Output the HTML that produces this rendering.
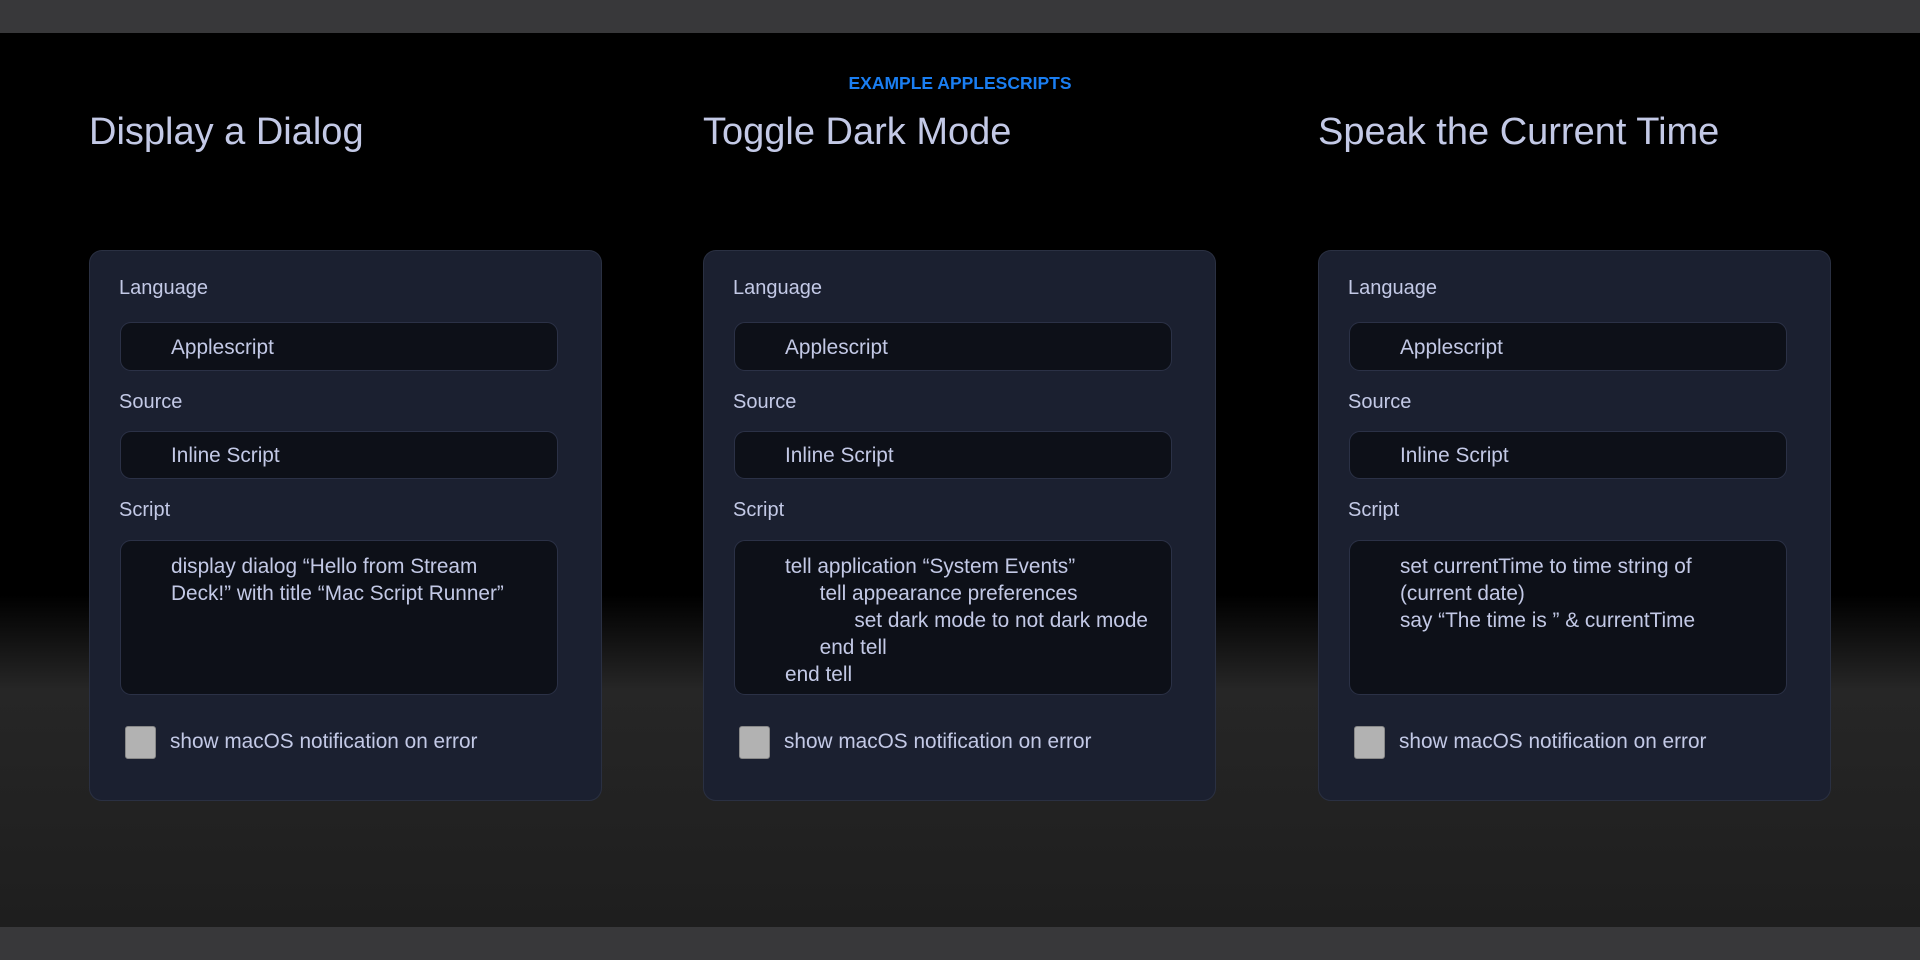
<!DOCTYPE html>
<html><head><meta charset="utf-8"><style>
*{box-sizing:border-box;margin:0;padding:0}
html,body{width:1920px;height:960px;overflow:hidden}
body{font-family:"Liberation Sans",sans-serif;background:linear-gradient(#000 0,#000 595px,#262626 690px,#1e1e1e 927px);position:relative}
.bar{position:absolute;left:0;width:1920px;height:33px;background:#38383a}
.h{position:absolute;top:73px;left:0;width:1920px;text-align:center;color:#1a7ef2;font-weight:bold;font-size:17.5px}
.col{position:absolute;top:0;width:513px}
.t{position:absolute;top:111px;left:0;white-space:nowrap;color:#c3c9e6;font-size:38px}
.card{position:absolute;top:250px;left:0;width:513px;height:551px;background:#1b2030;border:1px solid #2a3042;border-radius:13px}
.lb{position:absolute;left:29px;color:#c3c9e6;font-size:20px}
.in{position:absolute;left:30px;width:438px;background:#0d1018;border:1px solid #2b3146;border-radius:11px;color:#c3c9e6;font-size:20.8px;padding-left:50px}
.code{line-height:27px;padding-top:12px;white-space:pre}
.cb{position:absolute;left:35px;top:475px;width:31px;height:33px;background:#b2b2b2;border:1px solid #888;border-radius:3px}
.ct{position:absolute;left:80px;top:479px;color:#c3c9e6;font-size:20.8px}
</style></head><body>
<div class="bar" style="top:0"></div>
<div class="bar" style="top:927px"></div>
<div class="h">EXAMPLE APPLESCRIPTS</div>

<div class="col" style="left:89px">
<div class="t">Display a Dialog</div>
<div class="card">
<div class="lb" style="top:26px">Language</div>
<div class="in" style="top:71px;height:49px;line-height:49px">Applescript</div>
<div class="lb" style="top:140px">Source</div>
<div class="in" style="top:180px;height:48px;line-height:48px">Inline Script</div>
<div class="lb" style="top:248px">Script</div>
<div class="in code" style="top:289px;height:155px">display dialog “Hello from Stream
Deck!” with title “Mac Script Runner”</div>
<div class="cb"></div><div class="ct">show macOS notification on error</div>
</div></div>

<div class="col" style="left:703px">
<div class="t">Toggle Dark Mode</div>
<div class="card">
<div class="lb" style="top:26px">Language</div>
<div class="in" style="top:71px;height:49px;line-height:49px">Applescript</div>
<div class="lb" style="top:140px">Source</div>
<div class="in" style="top:180px;height:48px;line-height:48px">Inline Script</div>
<div class="lb" style="top:248px">Script</div>
<div class="in code" style="top:289px;height:155px">tell application “System Events”
      tell appearance preferences
            set dark mode to not dark mode
      end tell
end tell</div>
<div class="cb"></div><div class="ct">show macOS notification on error</div>
</div></div>

<div class="col" style="left:1318px">
<div class="t">Speak the Current Time</div>
<div class="card">
<div class="lb" style="top:26px">Language</div>
<div class="in" style="top:71px;height:49px;line-height:49px">Applescript</div>
<div class="lb" style="top:140px">Source</div>
<div class="in" style="top:180px;height:48px;line-height:48px">Inline Script</div>
<div class="lb" style="top:248px">Script</div>
<div class="in code" style="top:289px;height:155px">set currentTime to time string of
(current date)
say “The time is ” &amp; currentTime</div>
<div class="cb"></div><div class="ct">show macOS notification on error</div>
</div></div>
</body></html>
